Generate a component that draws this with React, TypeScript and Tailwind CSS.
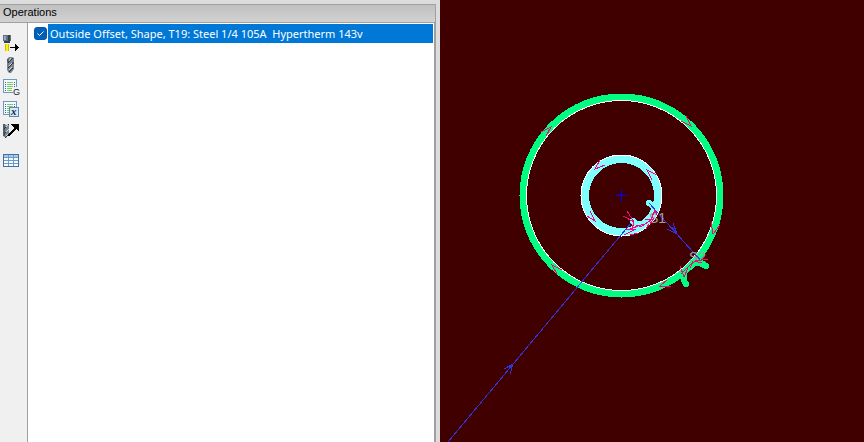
import { useState } from "react";
import type { ReactNode } from "react";

function ToolButton({ label, children }: { label: string; children: ReactNode }) {
  return (
    <button type="button" aria-label={label} className="block size-4">
      <svg viewBox="0 0 16 16" className="size-4 overflow-visible" shapeRendering="crispEdges" fill="none">
        {children}
      </svg>
    </button>
  );
}

function Sheet() {
  return (
    <>
      <path d="M.5.5h13v13H.5z" fill="#f4f8fc" stroke="#7097c0" />
      <path d="M2 3.5h2M2 5.5h2M2 7.5h2M2 9.5h2M2 11.5h2M11 3.5h2M11 5.5h2M11 7.5h2" stroke="#3a68a0" strokeDasharray="1 1" />
      <path d="M4 3.5h6M4 5.5h6M4 7.5h6M4 9.5h5M4 11.5h5" stroke="#75cf62" />
    </>
  );
}

function Toolbar() {
  return (
    <div role="toolbar" aria-label="Operation tools" className="flex w-7 shrink-0 flex-col gap-1.5 border-r border-[#a0a0a0] bg-[#f0f0f0] px-[3px] pt-3">
      <ToolButton label="Add operation">
        <path d="M0 0h8v6H7v2H1V6H0z" fill="#5f7080" />
        <path d="M1 1h2v4H1z" fill="#9aabba" />
        <path d="M5 0h2v7H5zM1 6h6v2H1z" fill="#34404c" />
        <path d="M2 9h4v7H2z" fill="#d8b900" />
        <path d="M3 9h2v7H3z" fill="#fff200" />
        <path d="M7 12h5V9h1v1h1v1h1v1h1v1h-1v1h-1v1h-1v1h-1v-3H7z" fill="#000" />
      </ToolButton>
      <ToolButton label="Drill">
        <g shapeRendering="auto">
          <path d="M6 0 4 2v11l2 3h2l3-4V1L9 0z" fill="#77828c" />
          <path d="m5 6 5-5M5 11l5-5M6 15l4-4M5 2v3M10 5v2" stroke="#27323c" />
          <path d="m6 4 2-3M6 9l3-3M6 13l3-3" stroke="#cbd5dc" />
        </g>
      </ToolButton>
      <ToolButton label="G-code list">
        <Sheet />
        <path d="M10 8h7v9h-7z" fill="#f0f0f0" />
        <text x="10" y="16" className="font-['Liberation_Sans',sans-serif] text-[9px]" fill="#111827">G</text>
      </ToolButton>
      <ToolButton label="Variables">
        <Sheet />
        <path d="M6.5 6.5h9v9h-9z" fill="#d7e7f5" stroke="#5688bb" />
        <text x="8" y="14" className="font-['Liberation_Serif',serif] text-[11px] font-bold italic" fill="#102536">x</text>
      </ToolButton>
      <ToolButton label="Move tool">
        <g shapeRendering="auto">
          <path d="M0 1h2l1 1 3-1v10l-3 4-3-2z" fill="#7a8791" />
          <path d="m1 6 5-5M1 11l5-5M2 15l4-4M1 1v12" stroke="#293540" />
          <path d="m3 4 2-2M3 9l3-3M3 13l2-2" stroke="#ccd7df" />
        </g>
        <path d="M8 1h8v7h-1l-2-2-7 8-1-2 6-7z" fill="#000" />
      </ToolButton>
      <div className="pt-2">
        <ToolButton label="Table">
          <path d="M.5 1.5h15v12H.5z" fill="#f5faff" />
          <path d="M1 2h14v2H1z" fill="#a9cae8" />
          <path d="M0 4.5h16M0 7.5h16M0 10.5h16M5.5 2v12M10.500 2v12" stroke="#6c9bc9" />
          <path d="M.5 1.5h15v12H.5z" stroke="#416fa5" />
        </ToolButton>
      </div>
    </div>
  );
}

function OperationsPanel() {
  const [enabled, setEnabled] = useState(true);
  return (
    <aside className="w-[440px] shrink-0 bg-[#dcdcdc] pt-1 pr-1">
      <section className="flex h-full flex-col border-t border-r border-[#a0a0a0]">
        <h1 className="h-[18px] shrink-0 border-b border-[#a0a0a0] bg-linear-to-b from-[#c0c0c0] to-[#d2d2d2] pl-[3px] font-['Liberation_Sans',sans-serif] text-[11px] leading-[15px] text-black">
          Operations
        </h1>
        <div className="flex min-h-0 flex-1">
          <Toolbar />
          <ul className="min-w-0 flex-1 border-r border-[#a0a0a0] bg-white pt-px pr-px">
            <li>
              <label className="flex h-[19px] items-center pl-1.5">
                <span className="grid w-3.5 shrink-0 items-center justify-start">
                  <input
                    type="checkbox"
                    checked={enabled}
                    onChange={(event) => setEnabled(event.target.checked)}
                    className="col-start-1 row-start-1 size-[13px] appearance-none rounded-[3px] border border-[#0058b0] bg-white checked:bg-[#005fb8]"
                  />
                  {enabled && (
                    <svg viewBox="0 0 13 13" className="pointer-events-none col-start-1 row-start-1 size-[13px]" fill="none">
                      <path d="m3.500 6.500 2 2 4-4" stroke="white" />
                    </svg>
                  )}
                </span>
                <span className="flex-1 overflow-hidden bg-[#0078d7] pl-0.5 font-['Noto_Sans',sans-serif] text-[11px] leading-[19px] whitespace-pre text-white">
                  Outside Offset, Shape, T19: Steel 1/4 105A  Hypertherm 143v
                </span>
              </label>
            </li>
          </ul>
        </div>
      </section>
    </aside>
  );
}

function Toolpath() {
  return (
    <main className="min-w-0 flex-1 bg-[#400000]">
      <svg className="block size-full" fill="none" shapeRendering="crispEdges" role="img" aria-label="Toolpath preview">
        <g transform="translate(-440 0)">
          <g stroke="#00ff80" strokeWidth="7" strokeLinecap="round">
            <circle cx="621.5" cy="195.5" r="98.5" />
            <path d="M706 266q-5-5-12-3M686 284q-4-5-1-14" strokeWidth="6" />
          </g>
          <g stroke="#80ffff" strokeWidth="8" strokeLinecap="round">
            <circle cx="621.5" cy="195.5" r="36.5" />
            <path d="M649 203q5 2 6 9M633 221q4 5 14 2" strokeWidth="6" />
          </g>
          <circle cx="621.5" cy="195.5" r="95" stroke="white" />
          <circle cx="621.5" cy="195.5" r="40.5" stroke="white" />
          <path d="M621.5 190v12M615 195.5h12" stroke="#0000ff" />
          <g stroke="#3333dd">
            <path d="M448 442 631 223M504 369l9-5-3 10M508 370l5-6" />
            <path d="m649 203 53 59M667 229l10 5-4-11M672 227l5 7" />
          </g>
          <g fill="#a0a0a0" className="font-['Liberation_Sans',sans-serif] text-[14px]">
            <text x="649" y="223">S1</text>
            <text x="689" y="262">S2</text>
          </g>
          <path d="M693 263q6-1 13 3" stroke="#00ff80" strokeWidth="6" strokeLinecap="round" />
          <g stroke="#ff0080">
            <path d="m541 132 10-5-5 9M686 116l5 10-10-5M605 165l-10 4 5-9M652 180l-5-10 10 5" />
            <path d="m587 216 8 5-5-10M562 270l-10-5 5 9M711 222l2 12 7-9M671 286h-11l7-6" />
            <path d="m623 216 11 6-7-11M634 222l-2 7M624 235l12-6-10 1M627 230l17-6M636 225l6 2" />
            <path d="m630 235 8-2M642 226l9-6 4-10 2 5M652 216l3-6M646 229l3-5M645 220l8-1M650 224l4-6" />
            <path d="m680 266 4 11 4-9M681 274l8-8 8-6M690 268l3-7M708 259l-12 2M694 261l8 2" />
          </g>
        </g>
      </svg>
    </main>
  );
}

export default function App() {
  return (
    <div className="flex h-screen overflow-hidden">
      <OperationsPanel />
      <Toolpath />
    </div>
  );
}
